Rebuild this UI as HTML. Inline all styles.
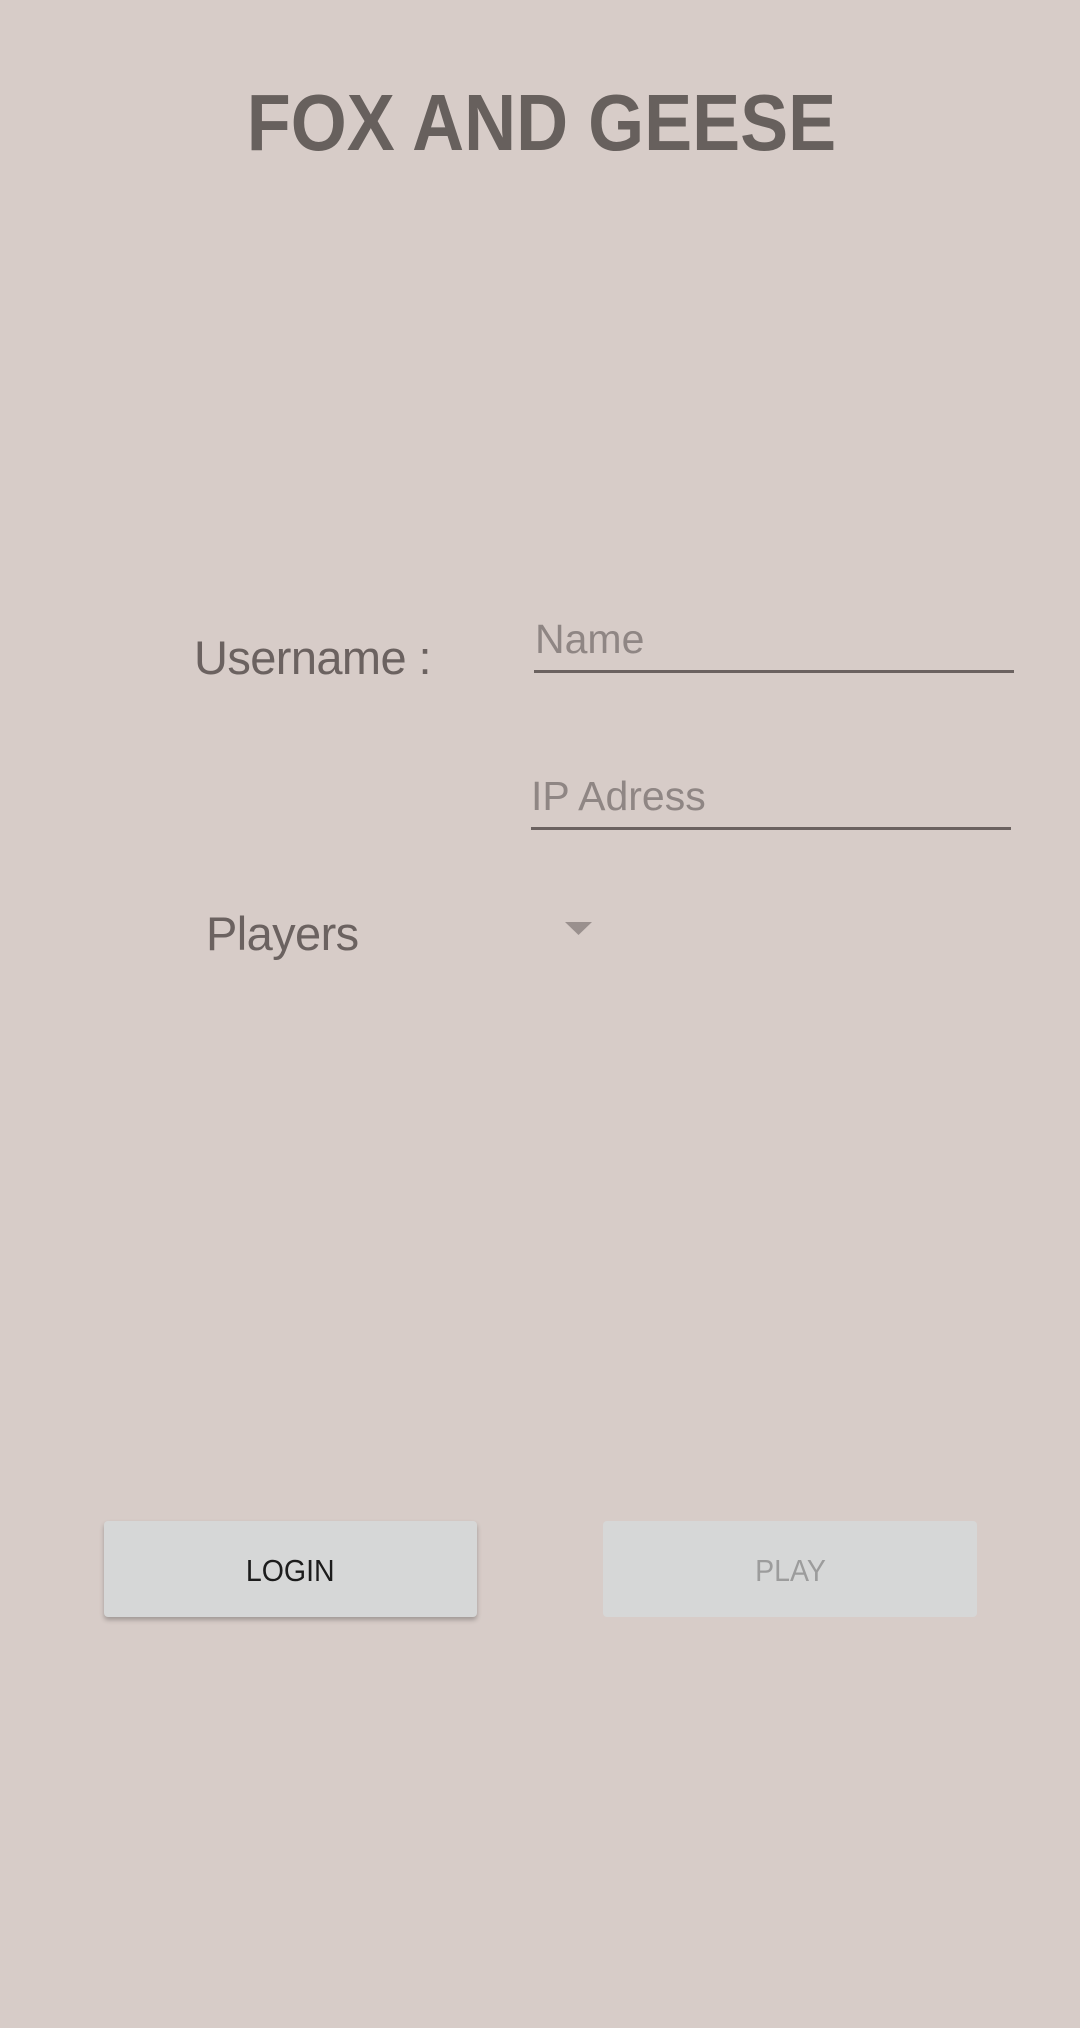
<!DOCTYPE html>
<html><head><meta charset="utf-8"><style>
html,body{margin:0;padding:0}
body{width:1080px;height:2028px;background:#d7ccc8;position:relative;overflow:hidden;font-family:"Liberation Sans",sans-serif}
.t{position:absolute;line-height:1;white-space:nowrap}
.u{position:absolute;height:3px;background:#6b6260}
.b{position:absolute;background:#d6d7d7;border-radius:4px;text-align:center;font-size:31px;line-height:100px}
.b span{display:inline-block;transform:scaleX(0.92)}
</style></head><body>
<div class="t" style="left:0;width:1082px;text-align:center;top:83px;font-size:80px;font-weight:bold;color:#67605d"><span style="display:inline-block;transform:scaleX(0.9)">FOX AND GEESE</span></div>
<div class="t" style="left:194px;top:634px;font-size:47px;color:#6b6260;letter-spacing:-0.6px">Username :</div>
<div class="t" style="left:535px;top:619px;font-size:41px;color:#8f8684">Name</div>
<div class="u" style="left:534px;top:670px;width:480px"></div>
<div class="t" style="left:531px;top:776px;font-size:41px;color:#8f8684">IP Adress</div>
<div class="u" style="left:531px;top:827px;width:480px"></div>
<div class="t" style="left:206px;top:910px;font-size:47px;color:#6b6260;letter-spacing:-0.6px">Players</div>
<svg style="position:absolute;left:565px;top:922px" width="27" height="13"><polygon points="0,0 27,0 13.5,13" fill="#9a908e"/></svg>
<div class="b" style="left:104px;top:1521px;width:373px;height:96px;color:#1c1c1c;box-shadow:0 3px 5px rgba(0,0,0,0.25)"><span>LOGIN</span></div>
<div class="b" style="left:603px;top:1521px;width:374px;height:96px;color:#9c9c9c"><span>PLAY</span></div>
</body></html>
